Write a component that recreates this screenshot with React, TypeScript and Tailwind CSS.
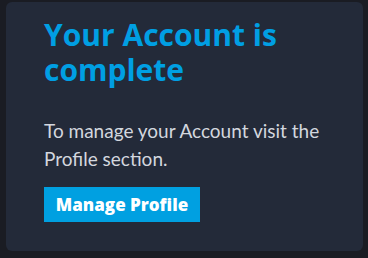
export default function App() {
  return (
    <div className="w-[368px] h-[258px] bg-[#1a1c23] pt-[2px] pl-[6px] font-['Lato',sans-serif]">
      <div className="flex flex-col items-start w-[357px] h-[249px] rounded-md bg-[#232a39] pl-[38px] pt-[15px]">
        <h1 className="font-['Open_Sans',sans-serif] text-[30px] leading-[35px] font-bold text-[#009fe3]">
          Your Account is
          <br />
          complete
        </h1>
        <p className="mt-[30px] text-[19px] leading-[28px] text-[#d3d7df]">
          To manage your Account visit the
          <br />
          Profile section.
        </p>
        <button className="mt-[14px] h-[35px] w-[156px] bg-[#00a0e1] font-['Open_Sans',sans-serif] text-[17px] font-extrabold text-white">
          Manage Profile
        </button>
      </div>
    </div>
  );
}
